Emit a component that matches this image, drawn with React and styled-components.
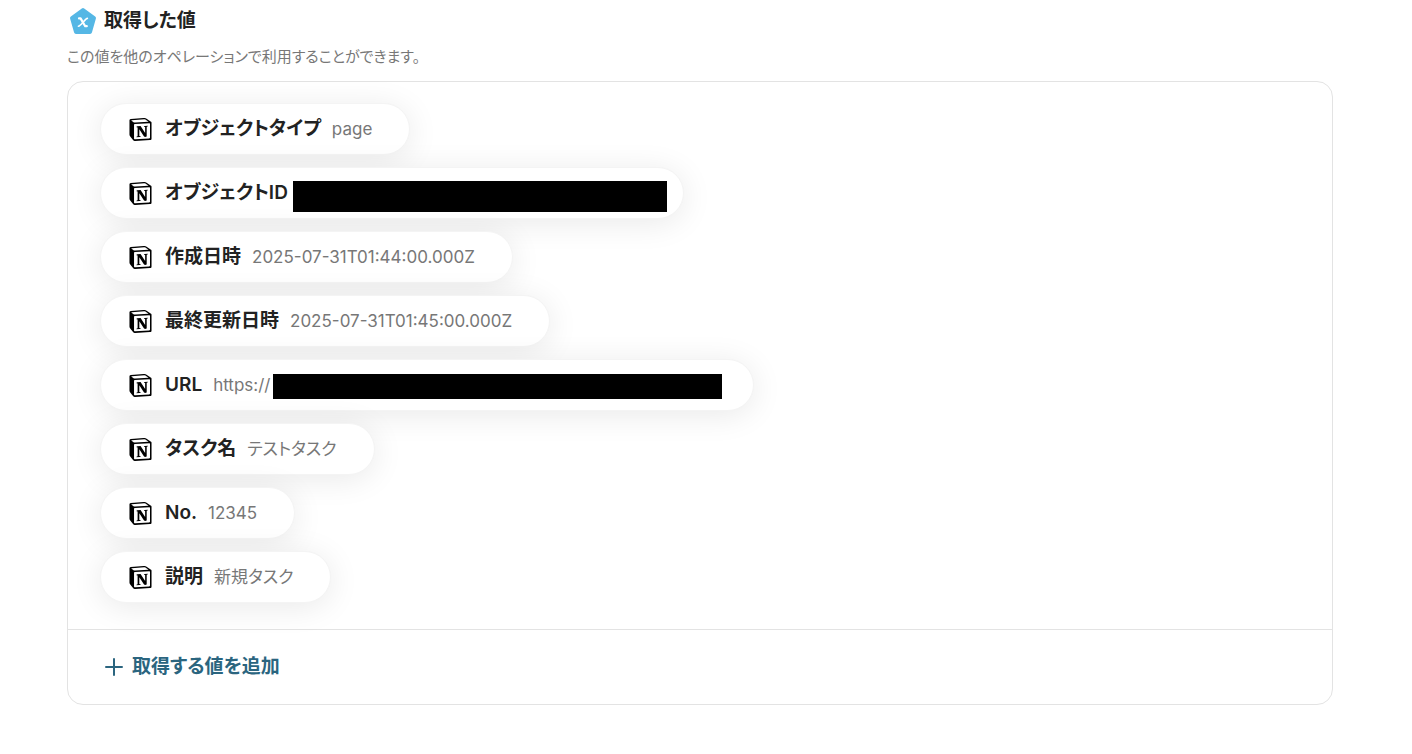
import styled, { createGlobalStyle } from 'styled-components';
import { SiNotion } from 'react-icons/si';

const values = [
  { id: 'type', label: 'オブジェクトタイプ', value: 'page' },
  { id: 'objectId', label: 'オブジェクトID', mask: { width: 374, height: 31, bottom: 6, right: 16, left: 5 } },
  { id: 'createdAt', label: '作成日時', value: '2025-07-31T01:44:00.000Z' },
  { id: 'updatedAt', label: '最終更新日時', value: '2025-07-31T01:45:00.000Z' },
  { id: 'url', label: 'URL', value: 'https://', mask: { width: 449, height: 25, bottom: 11, right: 31, left: 3 } },
  { id: 'taskName', label: 'タスク名', value: 'テストタスク' },
  { id: 'number', label: 'No.', value: '12345' },
  { id: 'description', label: '説明', value: '新規タスク' },
];

function ValueIcon() {
  return (
    <svg width="28" height="28" viewBox="0 0 28 28" aria-hidden="true">
      <path
        d="M14 3 L25 11 L21 25 H7 L3 11 Z"
        fill="#55b7e5"
        stroke="#55b7e5"
        strokeWidth="4"
        strokeLinejoin="round"
      />
      <path
        d="M10 11.4 H11.6 L16.2 19.2 H17.8"
        fill="none"
        stroke="#fff"
        strokeWidth="2.2"
        strokeLinejoin="round"
        strokeLinecap="round"
      />
      <path
        d="M18.4 11.4 C16.2 11.4 12 19.2 9.4 19.2"
        fill="none"
        stroke="#fff"
        strokeWidth="1.6"
        strokeLinecap="round"
      />
    </svg>
  );
}

function ValueItem({ label, value, mask }) {
  return (
    <Pill $masked={!!mask}>
      <NotionIcon title="" />
      <Label>{label}</Label>
      {value && <Value>{value}</Value>}
      {mask && (
        <Mask $width={mask.width} $height={mask.height} $bottom={mask.bottom} $left={mask.left} $right={mask.right} />
      )}
    </Pill>
  );
}

export default function App() {
  return (
    <>
      <GlobalStyle />
      <Page>
        <Header>
          <ValueIcon />
          <h2>取得した値</h2>
        </Header>
        <Description>この値を他のオペレーションで利用することができます。</Description>
        <Panel>
          <ValueList>
            {values.map((item) => (
              <li key={item.id}>
                <ValueItem label={item.label} value={item.value} mask={item.mask} />
              </li>
            ))}
          </ValueList>
          <Footer>
            <AddButton type="button">
              <svg width="18" height="18" viewBox="0 0 18 18" aria-hidden="true">
                <path d="M9 1v16M1 9h16" stroke="currentColor" strokeWidth="2" strokeLinecap="round" />
              </svg>
              取得する値を追加
            </AddButton>
          </Footer>
        </Panel>
      </Page>
    </>
  );
}

const GlobalStyle = createGlobalStyle`
  * {
    box-sizing: border-box;
  }

  body {
    margin: 0;
    background: #fff;
    color: #222;
    font-family: Inter, 'Noto Sans CJK JP', sans-serif;
    font-feature-settings: 'palt';
  }
`;

const Page = styled.main`
  padding: 7px 79px 48px 67px;
`;

const Header = styled.header`
  display: flex;
  align-items: center;
  gap: 7px;
  padding-left: 2px;

  h2 {
    margin: 0;
    font-size: 19px;
    font-weight: 600;
    line-height: 28px;
  }
`;

const Description = styled.p`
  margin: 11px 0 14px;
  color: #777;
  font-size: 15px;
  line-height: 21px;
`;

const Panel = styled.section`
  border: 1px solid #e3e3e3;
  border-radius: 16px;
`;

const ValueList = styled.ul`
  display: flex;
  flex-direction: column;
  gap: 12px;
  margin: 0;
  padding: 21px 32px 26px;
  list-style: none;

  li {
    display: flex;
  }
`;

const Pill = styled.div`
  display: flex;
  align-items: center;
  height: 52px;
  padding: 0 ${({ $masked }) => ($masked ? '0' : '37px')} 0 28px;
  border: 1px solid #f4f4f4;
  border-radius: 26px;
  background: #fff;
  box-shadow: 0 4px 32px rgba(0, 0, 0, 0.09);
  white-space: nowrap;
`;

const NotionIcon = styled(SiNotion)`
  width: 23px;
  height: 23px;
  margin-right: 13px;
  color: #000;
`;

const Label = styled.span`
  font-size: 19px;
  font-weight: 600;
  line-height: 28px;
`;

const Value = styled.span`
  margin-left: 11px;
  color: #777;
  font-size: 17px;
  line-height: 24px;
`;

const Mask = styled.span`
  align-self: flex-end;
  width: ${({ $width }) => $width}px;
  height: ${({ $height }) => $height}px;
  margin: 0 ${({ $right }) => $right}px ${({ $bottom }) => $bottom}px ${({ $left }) => $left}px;
  background: #000;
`;

const Footer = styled.div`
  padding: 18px 32px;
  border-top: 1px solid #e3e3e3;
`;

const AddButton = styled.button`
  display: flex;
  align-items: center;
  gap: 9px;
  padding: 5px;
  border: 0;
  background: none;
  color: #2b657f;
  font: inherit;
  font-size: 19px;
  font-weight: 600;
  line-height: 28px;
  font-feature-settings: inherit;
  cursor: pointer;
`;
